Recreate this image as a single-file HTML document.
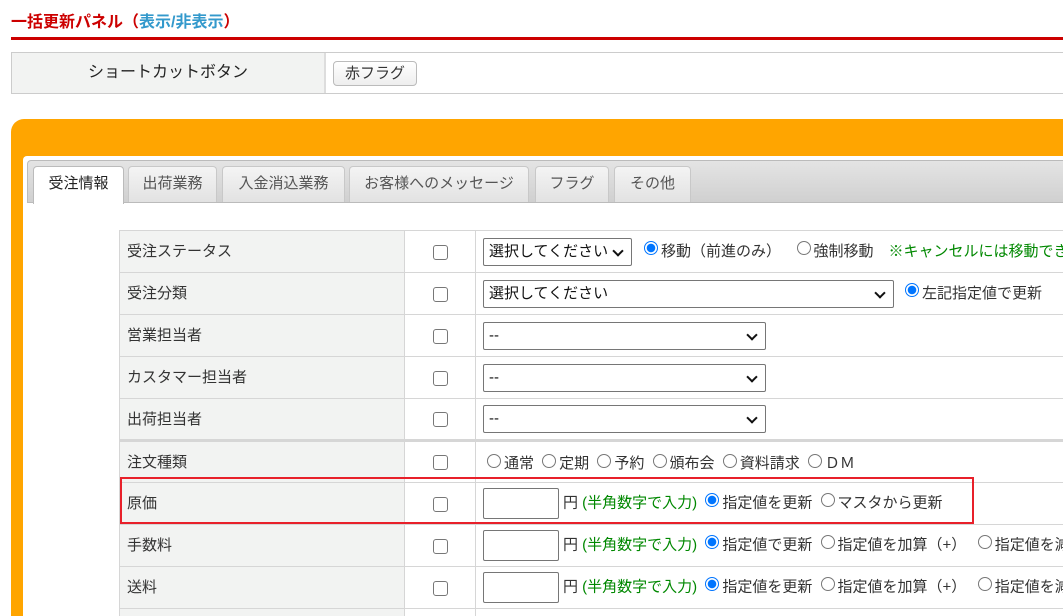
<!DOCTYPE html>
<html><head><meta charset="utf-8"><style>
*{box-sizing:border-box;margin:0;padding:0}
html,body{width:1063px;height:616px;overflow:hidden}
body{background:#fff;font-family:"Liberation Sans","Noto Sans CJK JP",sans-serif;font-size:15px;color:#333;position:relative}
.abs{position:absolute}
.title{left:11px;top:8px;font-size:16px;font-weight:bold;color:#c00}
.title span{color:#3399cc}
.redline{left:11px;top:37px;width:1052px;height:3px;background:#c00}
.sc{left:11px;top:52px;width:1052px;height:42px;border:1px solid #ccc;border-right:none;background:#fff}
.sc .l{position:absolute;left:0;top:0;width:314px;height:40px;background:#f2f3f2;border-right:2px solid #ddd;text-align:center;line-height:40px;font-size:16px;color:#222}
.btn{position:absolute;left:321px;top:8px;width:84px;height:25px;border:1px solid #bbb;border-radius:4px;background:linear-gradient(#fff,#eee);text-align:center;line-height:23px;font-size:15px;color:#333}
.orange{left:11px;top:119px;width:1052px;height:497px;background:#ffa500;border-radius:13px 0 0 0}
.panel{left:23px;top:156px;width:1040px;height:460px;background:#fff;border-radius:4px 0 0 0}
.tabbar{left:27px;top:160px;width:1036px;height:43px;background:linear-gradient(#e4e4e4,#d0d0d0);border:1px solid #bbb;border-right:none;border-radius:4px 0 0 0}
.tab{position:absolute;top:166px;height:36px;background:linear-gradient(#f4f4f4,#e2e2e2);border:1px solid #c8c8c8;border-bottom:none;border-radius:4px 4px 0 0;text-align:center;line-height:34px;font-size:15px;color:#555}
.tab.act{background:#fff;color:#222;height:38px;border-color:#bbb}
.wrap{position:absolute;left:119px;top:230px;width:944px;height:386px;overflow:hidden}
table{border-collapse:collapse;width:960px;table-layout:fixed}
td{border:1px solid #d6d6d6;height:42px;vertical-align:middle;font-size:15px;color:#333;overflow:hidden}
td.l{background:#f2f3f2;padding-left:7px;padding-bottom:2px}
td.c{text-align:center}
td.v{padding-left:7px;white-space:nowrap}
.cb{display:inline-block;width:15px;height:15px;border:1px solid #777;border-radius:3px;vertical-align:middle}
.sel{display:inline-block;height:28px;border:1px solid #767676;border-radius:2px;vertical-align:middle;position:relative;padding-left:5px;line-height:26px;font-size:15px;color:#111}
.sel:after{content:"";position:absolute;right:9px;top:8px;width:6px;height:6px;border-right:2px solid #111;border-bottom:2px solid #111;transform:rotate(45deg)}
.r{display:inline-block;width:14px;height:14px;border:1px solid #777;border-radius:50%;vertical-align:0;margin:0 3px 0 4px}
.r.on{border:1px solid #0075ff;background:radial-gradient(#0075ff 4px,#fff 4.5px)}
.g{color:#080}
.inp{display:inline-block;width:76px;height:31px;border:1px solid #767676;border-radius:2px;vertical-align:middle;margin-right:4px}
.redbox{left:120px;top:477px;width:854px;height:47px;border:2px solid #e8202a}
</style></head><body>
<div class="abs title">一括更新パネル（<span>表示/非表示</span>）</div>
<div class="abs redline"></div>
<div class="abs sc"><div class="l">ショートカットボタン</div><div class="btn">赤フラグ</div></div>
<div class="abs orange"></div>
<div class="abs panel"></div>
<div class="abs tabbar"></div>
<div class="tab act" style="left:33px;width:91px">受注情報</div>
<div class="tab" style="left:128px;width:89px">出荷業務</div>
<div class="tab" style="left:222px;width:123px">入金消込業務</div>
<div class="tab" style="left:349px;width:180px">お客様へのメッセージ</div>
<div class="tab" style="left:535px;width:74px">フラグ</div>
<div class="tab" style="left:614px;width:77px">その他</div>
<div class="wrap"><table>
<colgroup><col style="width:285px"><col style="width:71px"><col></colgroup>
<tr><td class="l">受注ステータス</td><td class="c"><span class="cb"></span></td><td class="v"><span class="sel" style="width:149px">選択してください</span><span class="r on" style="margin-left:12px"></span>移動（前進のみ）　<span class="r" style="margin-left:8px"></span>強制移動　<span class="g">※キャンセルには移動できません</span></td></tr>
<tr><td class="l">受注分類</td><td class="c"><span class="cb"></span></td><td class="v"><span class="sel" style="width:411px">選択してください</span><span class="r on" style="margin-left:11px"></span>左記指定値で更新</td></tr>
<tr><td class="l">営業担当者</td><td class="c"><span class="cb"></span></td><td class="v"><span class="sel" style="width:283px">--</span></td></tr>
<tr><td class="l">カスタマー担当者</td><td class="c"><span class="cb"></span></td><td class="v"><span class="sel" style="width:283px">--</span></td></tr>
<tr><td class="l">出荷担当者</td><td class="c"><span class="cb"></span></td><td class="v"><span class="sel" style="width:283px">--</span></td></tr>
<tr style="border-top:3px solid #d6d6d6"><td class="l">注文種類</td><td class="c"><span class="cb"></span></td><td class="v"><span class="r"></span>通常 <span class="r"></span>定期 <span class="r"></span>予約 <span class="r"></span>頒布会 <span class="r"></span>資料請求 <span class="r"></span>ＤＭ</td></tr>
<tr><td class="l">原価</td><td class="c"><span class="cb"></span></td><td class="v"><span class="inp"></span>円 <span class="g">(半角数字で入力)</span> <span class="r on"></span>指定値を更新 <span class="r"></span>マスタから更新</td></tr>
<tr><td class="l">手数料</td><td class="c"><span class="cb"></span></td><td class="v"><span class="inp"></span>円 <span class="g">(半角数字で入力)</span> <span class="r on"></span>指定値で更新 <span class="r"></span>指定値を加算（+）　<span class="r"></span>指定値を減算</td></tr>
<tr><td class="l">送料</td><td class="c"><span class="cb"></span></td><td class="v"><span class="inp"></span>円 <span class="g">(半角数字で入力)</span> <span class="r on"></span>指定値を更新 <span class="r"></span>指定値を加算（+）　<span class="r"></span>指定値を減算</td></tr>
<tr><td class="l"></td><td class="c"></td><td class="v"></td></tr>
</table></div>
<div class="abs redbox"></div>
</body></html>
